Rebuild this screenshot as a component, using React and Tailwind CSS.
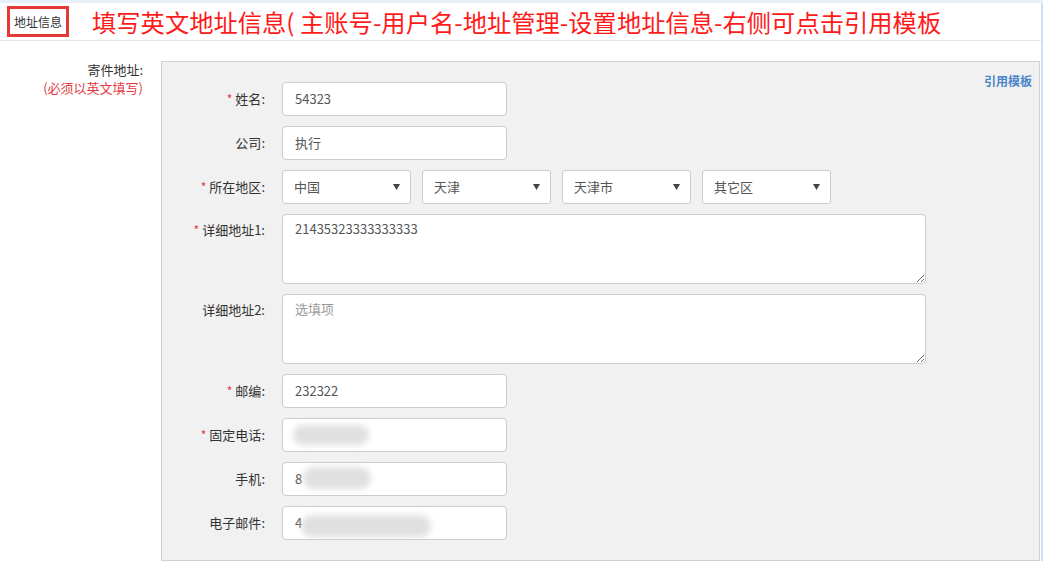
import React from "react";

const Star = () => <span className="text-[#e4393c] mr-[3px] text-[12px]">*</span>;

function Label({ req, children }) {
  return (
    <div className="w-[103px] shrink-0 text-right text-[13px] text-[#333] leading-[34px] pr-0">
      {req && <Star />}
      {children}:
    </div>
  );
}

function Row({ label, req, children, top = "" }) {
  return (
    <div className="flex">
      <Label req={req}>{label}</Label>
      <div className={"ml-[17px] " + top}>{children}</div>
    </div>
  );
}

function Input({ value, children }) {
  return (
    <div className="relative w-[225px] h-[34px] bg-white border border-[#ccc] rounded-[4px] pl-[12px] text-[13px] text-[#555] leading-[32px] overflow-hidden">
      {value}
      {children}
    </div>
  );
}

function Select({ value }) {
  return (
    <div className="w-[129px] h-[34px] bg-white border border-[#ccc] rounded-[3px] pl-[11px] pr-[10px] flex items-center justify-between text-[13px] text-[#555]">
      <span>{value}</span>
      <svg width="7" height="6" viewBox="0 0 7 6">
        <path d="M0 0 L7 0 L3.5 6 Z" fill="#444" />
      </svg>
    </div>
  );
}

function Area({ value, placeholder }) {
  return (
    <textarea
      readOnly
      defaultValue={value}
      placeholder={placeholder}
      className="block w-[644px] h-[70px] bg-white border border-[#ccc] rounded-[4px] px-[12px] py-[4px] text-[13px] text-[#555] leading-[20px] placeholder:text-[#999] outline-none font-['Noto_Sans_CJK_SC',sans-serif]"
    />
  );
}

const Blob = ({ cls }) => (
  <div className={"absolute bg-[#e0e0e0] rounded-full blur-[3px] " + cls} />
);

export default function App() {
  return (
    <div className="relative w-[1043px] h-[561px] bg-white overflow-hidden font-['Noto_Sans_CJK_SC',sans-serif]">
      <div className="h-[3px] bg-[#e8f0fa]" />
      <div className="flex">
        <div className="flex-1">
          <div className="h-[38px] border-b border-[#e6e6e6] flex items-center">
            <div className="ml-[7px] w-[62px] h-[31px] border-[3px] border-[#e53935] flex items-center justify-center text-[12px] text-[#333]">
              地址信息
            </div>
            <div className="ml-[23px] text-[24.3px] text-[#ff1a1a] leading-[30px] whitespace-nowrap">
              填写英文地址信息( 主账号-用户名-地址管理-设置地址信息-右侧可点击引用模板
            </div>
          </div>
          <div className="flex pt-[20px]">
            <div className="w-[161px] shrink-0 pr-[18px] text-right text-[13px] leading-[18px]">
              <div className="text-[#333]">寄件地址:</div>
              <div className="text-[#e4393c]">(必须以英文填写)</div>
            </div>
            <div className="flex-1 h-[500px] mr-[1px] bg-[#f1f1f1] border border-[#d2d2d2] flex">
              <div className="flex-1 pt-[20px] flex flex-col gap-[10px]">
                <Row label="姓名" req>
                  <Input value="54323" />
                </Row>
                <Row label="公司">
                  <Input value="执行" />
                </Row>
                <Row label="所在地区" req>
                  <div className="flex gap-[11px]">
                    <Select value="中国" />
                    <Select value="天津" />
                    <Select value="天津市" />
                    <Select value="其它区" />
                  </div>
                </Row>
                <div className="flex">
                  <div className="w-[103px] shrink-0 text-right text-[13px] text-[#333] leading-[32px]">
                    <Star />详细地址1:
                  </div>
                  <div className="ml-[17px]">
                    <Area value="21435323333333333" />
                  </div>
                </div>
                <div className="flex">
                  <div className="w-[103px] shrink-0 text-right text-[13px] text-[#333] leading-[32px]">
                    详细地址2:
                  </div>
                  <div className="ml-[17px]">
                    <Area placeholder="选填项" />
                  </div>
                </div>
                <Row label="邮编" req>
                  <Input value="232322" />
                </Row>
                <Row label="固定电话" req>
                  <Input>
                    <Blob cls="left-[10px] top-[6px] w-[76px] h-[20px]" />
                  </Input>
                </Row>
                <Row label="手机">
                  <Input value="8">
                    <Blob cls="left-[20px] top-[4px] w-[68px] h-[22px]" />
                  </Input>
                </Row>
                <Row label="电子邮件">
                  <Input value="4">
                    <Blob cls="left-[18px] top-[8px] w-[130px] h-[22px]" />
                  </Input>
                </Row>
              </div>
              <div className="pt-[10px] pr-[7px] text-[12px] font-bold text-[#4a86c8] leading-[18px]">
                引用模板
              </div>
            </div>
          </div>
        </div>
        <div className="w-[2px] bg-[#cfe0f3] h-[561px]" />
      </div>
    </div>
  );
}
